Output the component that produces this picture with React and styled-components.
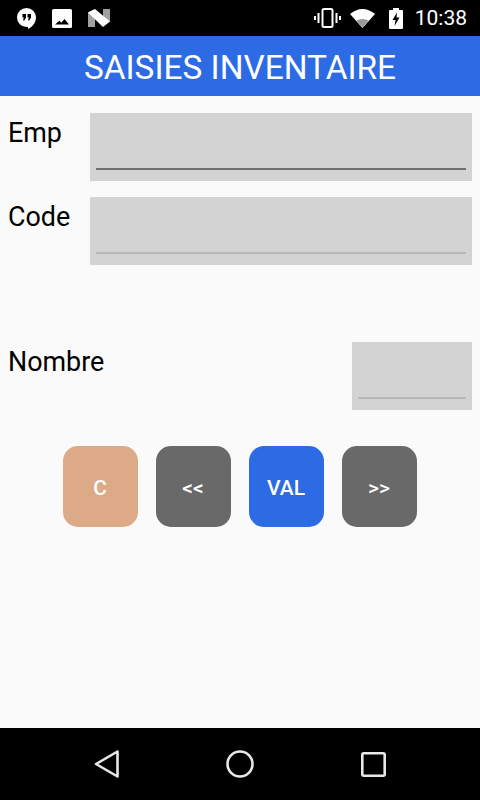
import React from "react";
import styled, { createGlobalStyle } from "styled-components";

const GlobalStyle = createGlobalStyle`
  html, body {
    margin: 0;
    padding: 0;
    background: #000;
  }
  * {
    box-sizing: border-box;
  }
`;

const Screen = styled.div`
  display: flex;
  flex-direction: column;
  width: 480px;
  height: 800px;
  font-family: Roboto, "Liberation Sans", sans-serif;
  background: #fafafa;
`;

const StatusBar = styled.div`
  display: flex;
  justify-content: space-between;
  align-items: center;
  height: 36px;
  padding: 0 13px 0 17px;
  background: #000;
`;

const StatusGroup = styled.div`
  display: flex;
  align-items: center;
  gap: ${(p) => p.$gap}px;
`;

const Clock = styled.span`
  margin-left: 3px;
  color: #fff;
  font-size: 21px;
  line-height: 36px;
`;

const Header = styled.div`
  display: flex;
  justify-content: center;
  align-items: center;
  height: 60px;
  padding-top: 2px;
  background: #2d6be4;
  color: #fff;
  font-size: 33.4px;
`;

const Main = styled.div`
  flex: 1;
  display: flex;
  flex-direction: column;
  padding: 17px 8px 0;
`;

const Row = styled.div`
  display: flex;
  justify-content: space-between;
  margin-bottom: ${(p) => p.$after}px;
`;

const Label = styled.div`
  padding-top: 4px;
  color: #000;
  font-size: 26.9px;
  line-height: 33px;
`;

const Field = styled.div`
  display: flex;
  align-items: flex-end;
  width: ${(p) => p.$width}px;
  height: 68px;
  padding: 0 6px 11px;
  background: #d3d3d3;
`;

const Underline = styled.div`
  width: 100%;
  height: 2px;
  background: ${(p) => (p.$active ? "#6f6f6f" : "#b8b8b8")};
`;

const Buttons = styled.div`
  display: flex;
  justify-content: center;
  gap: 18px;
`;

const ActionButton = styled.button`
  width: 75px;
  height: 81px;
  padding: 2px 1px 0 0;
  border: none;
  border-radius: 15px;
  background: ${(p) => p.$color};
  color: #fff;
  font-family: inherit;
  font-size: 21px;
  font-weight: 500;
`;

const NavBar = styled.div`
  display: flex;
  justify-content: space-between;
  align-items: center;
  height: 72px;
  padding: 0 94px 0 94px;
  background: #000;
`;

const HangoutsIcon = () => (
  <svg width="19" height="21" viewBox="0 0 19 21">
    <path
      d="M9.500 0a9.500 9.500 0 0 0 0 19H11v2c4-2 8-6 8-11.500A9.500 9.500 0 0 0 9.500 0z"
      fill="#fff"
    />
    <path d="M5.500 6h3.500v3.800l-1.800 2.700H6l.8-3H5.500zM10.500 6h3.500v3.800l-1.800 2.700H11l.8-3h-1.300z" fill="#000" />
  </svg>
);

const PictureIcon = () => (
  <svg width="20" height="19" viewBox="0 0 20 19">
    <path
      d="M1.500 0h17a1.500 1.500 0 0 1 1.500 1.500v16a1.500 1.500 0 0 1-1.500 1.500h-17A1.500 1.500 0 0 1 0 17.500v-16A1.500 1.500 0 0 1 1.500 0zM3 15.500h14l-4.500-5.500-3.200 3.800-1.800-2.100z"
      fill="#fff"
      fillRule="evenodd"
    />
  </svg>
);

const NougatIcon = () => (
  <svg width="22" height="18" viewBox="0 0 22 18">
    <path d="M0 3.500l7-3.500v18H0z" fill="#a0a0a0" />
    <path d="M15 0h7v13l-7-3z" fill="#a0a0a0" />
    <path d="M0 3.500L7 0l15 12.500L15 18z" fill="#fff" />
  </svg>
);

const VibrateIcon = () => (
  <svg width="27" height="20" viewBox="0 0 27 20">
    <rect x="8.500" y="1" width="10" height="18" rx="1.500" fill="none" stroke="#fff" strokeWidth="2" />
    <path d="M4.500 5v10M22.500 5v10" stroke="#fff" strokeWidth="2" />
    <path d="M1 8v4M26 8v4" stroke="#fff" strokeWidth="2" />
  </svg>
);

const WifiIcon = () => (
  <svg width="30" height="19" viewBox="0 0 30 19">
    <path d="M0 5C3.500 2 8 0 12.500 0S21.500 2 25 5L12.500 19z" fill="#fff" />
    <path d="M6.500 11.800C8 10.700 10.200 10 12.500 10s4.500.7 6 1.800L12.500 19z" fill="#9a9a9a" />
  </svg>
);

const BatteryIcon = () => (
  <svg width="14" height="21" viewBox="0 0 14 21">
    <path d="M4 0h6v2h3a1 1 0 0 1 1 1v17a1 1 0 0 1-1 1H1a1 1 0 0 1-1-1V3a1 1 0 0 1 1-1h3z" fill="#fff" />
    <path d="M8 4.500L3.500 12H6.500L5.500 18 10.500 9.500H7.500z" fill="#000" />
  </svg>
);

const BackIcon = () => (
  <svg width="25" height="30" viewBox="0 0 25 30">
    <path
      d="M23.500 2.500v25L2 15z"
      fill="none"
      stroke="#e8e8e8"
      strokeWidth="2.600"
      strokeLinejoin="round"
    />
  </svg>
);

const HomeIcon = () => (
  <svg width="28" height="28" viewBox="0 0 28 28">
    <circle cx="14" cy="14" r="12.500" fill="none" stroke="#e8e8e8" strokeWidth="2.600" />
  </svg>
);

const RecentIcon = () => (
  <svg width="25" height="25" viewBox="0 0 25 25">
    <rect x="1.300" y="1.300" width="22.400" height="22.400" rx="1.500" fill="none" stroke="#e8e8e8" strokeWidth="2.600" />
  </svg>
);

const App = () => {
  return (
    <Screen>
      <GlobalStyle />
      <StatusBar>
        <StatusGroup $gap={16}>
          <HangoutsIcon />
          <PictureIcon />
          <NougatIcon />
        </StatusGroup>
        <StatusGroup $gap={9}>
          <VibrateIcon />
          <WifiIcon />
          <BatteryIcon />
          <Clock>10:38</Clock>
        </StatusGroup>
      </StatusBar>
      <Header>SAISIES INVENTAIRE</Header>
      <Main>
        <Row $after={16}>
          <Label>Emp</Label>
          <Field $width={382}>
            <Underline $active />
          </Field>
        </Row>
        <Row $after={77}>
          <Label>Code</Label>
          <Field $width={382}>
            <Underline />
          </Field>
        </Row>
        <Row $after={36}>
          <Label>Nombre</Label>
          <Field $width={120}>
            <Underline />
          </Field>
        </Row>
        <Buttons>
          <ActionButton $color="#dcaa86">C</ActionButton>
          <ActionButton $color="#696969">&lt;&lt;</ActionButton>
          <ActionButton $color="#2d6be4">VAL</ActionButton>
          <ActionButton $color="#696969">&gt;&gt;</ActionButton>
        </Buttons>
      </Main>
      <NavBar>
        <BackIcon />
        <HomeIcon />
        <RecentIcon />
      </NavBar>
    </Screen>
  );
};

export default App;
